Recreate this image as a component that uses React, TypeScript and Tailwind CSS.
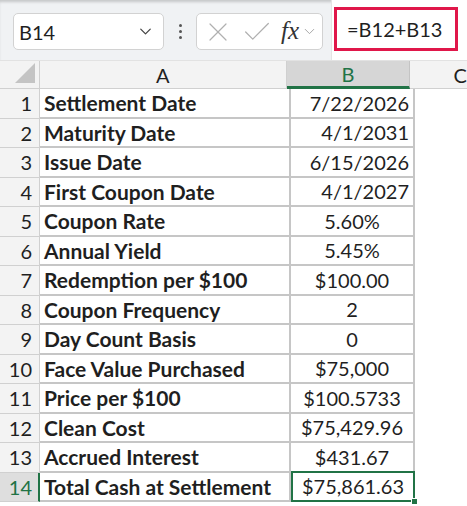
import { ChevronDown, X, Check } from 'lucide-react';

const rows = [
  { label: 'Settlement Date', value: '7/22/2026', align: 'right' },
  { label: 'Maturity Date', value: '4/1/2031', align: 'right' },
  { label: 'Issue Date', value: '6/15/2026', align: 'right' },
  { label: 'First Coupon Date', value: '4/1/2027', align: 'right' },
  { label: 'Coupon Rate', value: '5.60%', align: 'center' },
  { label: 'Annual Yield', value: '5.45%', align: 'center' },
  { label: 'Redemption per $100', value: '$100.00', align: 'center' },
  { label: 'Coupon Frequency', value: '2', align: 'center' },
  { label: 'Day Count Basis', value: '0', align: 'center' },
  { label: 'Face Value Purchased', value: '$75,000', align: 'center' },
  { label: 'Price per $100', value: '$100.5733', align: 'center' },
  { label: 'Clean Cost', value: '$75,429.96', align: 'center' },
  { label: 'Accrued Interest', value: '$431.67', align: 'center' },
  { label: 'Total Cash at Settlement', value: '$75,861.63', align: 'center' },
];

export default function App() {
  return (
    <div
      className="w-[467px] h-[506px] overflow-hidden bg-white text-[#1f1f1f]"
      style={{ fontFamily: 'Lato, "Open Sans", sans-serif' }}
    >
      {/* formula bar */}
      <div className="h-[61px] flex bg-[#f0f2f4] shadow-[inset_0_3px_3px_-1px_rgba(0,0,0,0.18)] border-b border-[#e2e2e2]">
        <div className="ml-[13px] mt-[13px] w-[151px] h-[37px] rounded-[5px] border border-[#d2d2d2] bg-white flex items-center justify-between pl-[5px] pr-[8px]">
          <span className="text-[20px]">B14</span>
          <ChevronDown size={19} strokeWidth={1.6} className="text-[#444]" />
        </div>
        <div className="w-[32px] flex flex-col items-center justify-center gap-[3px] pt-[2px]">
          <span className="w-[3px] h-[3px] rounded-full bg-[#555]" />
          <span className="w-[3px] h-[3px] rounded-full bg-[#555]" />
          <span className="w-[3px] h-[3px] rounded-full bg-[#555]" />
        </div>
        <div className="mt-[13px] w-[127px] h-[37px] rounded-[5px] border border-[#d2d2d2] bg-white flex items-center pl-[5px]">
          <X size={32} strokeWidth={0.9} className="text-[#b0b0b0]" />
          <Check size={34} strokeWidth={0.9} className="text-[#b0b0b0] ml-[6px]" />
          <span
            className="ml-[7px] text-[25px] italic text-[#333] leading-none pb-[3px]"
            style={{ fontFamily: '"Liberation Serif", serif' }}
          >
            fx
          </span>
          <ChevronDown size={17} strokeWidth={1.3} className="text-[#a0a0a0] ml-[2px]" />
        </div>
        <div className="ml-[8px] flex-1 bg-white border-l border-[#e4e4e4] pl-[2px] pt-[7px]">
          <div className="w-[124px] h-[44px] border-[3px] border-[#e0174a] flex items-center pl-[10px]">
            <span className="text-[20px]">=B12+B13</span>
          </div>
        </div>
      </div>

      {/* column headers */}
      <div className="flex h-[28px] bg-[#f3f3f3] text-[20px]">
        <div className="w-[40px] border-r border-[#d0d0d0] border-b flex items-end justify-end pr-[4px] pb-[5px]">
          <svg width="20" height="20" viewBox="0 0 20 20">
            <polygon points="20,0 20,20 0,20" fill="#c4c4c4" />
          </svg>
        </div>
        <div className="w-[251px] border-r border-b border-[#d0d0d0] flex items-center justify-center">A</div>
        <div className="w-[124px] bg-[#d6d6d6] border-r border-[#c4c4c4] border-b-[3px] border-b-[#217346] flex items-center justify-center text-[#217346]">
          B
        </div>
        <div className="flex-1 border-b border-[#d0d0d0] flex items-center pl-[44px]">C</div>
      </div>

      {/* rows */}
      {rows.map((r, i) => {
        const last = i === rows.length - 1;
        return (
          <div key={i} className="flex h-[29.5px] text-[20px]">
            <div
              className={
                last
                  ? 'w-[40px] bg-[#dedede] border-r-2 border-r-[#217346] border-b border-b-[#d0d0d0] flex items-center justify-end pr-[6px] text-[#217346]'
                  : 'w-[40px] bg-[#f3f3f3] border-r border-b border-[#d0d0d0] flex items-center justify-end pr-[7px]'
              }
            >
              {i + 1}
            </div>
            <div className="w-[251px] border-r-2 border-b-2 border-[#c6c6c6] flex items-center pl-[4px] font-bold text-[21px] whitespace-nowrap">
              {r.label}
            </div>
            <div
              className={
                (last
                  ? 'relative border-2 border-[#217346] -mt-[2px] h-[31.5px] '
                  : 'border-r-2 border-b-2 border-[#c6c6c6] ') +
                'w-[124px] flex items-center ' +
                (r.align === 'right' ? 'justify-end pr-[4px]' : 'justify-center')
              }
            >
              {r.value}
              {last && (
                <span className="absolute -right-[5px] -bottom-[5px] w-[7px] h-[7px] bg-[#217346] border border-white" />
              )}
            </div>
            <div className="flex-1" />
          </div>
        );
      })}
    </div>
  );
}
